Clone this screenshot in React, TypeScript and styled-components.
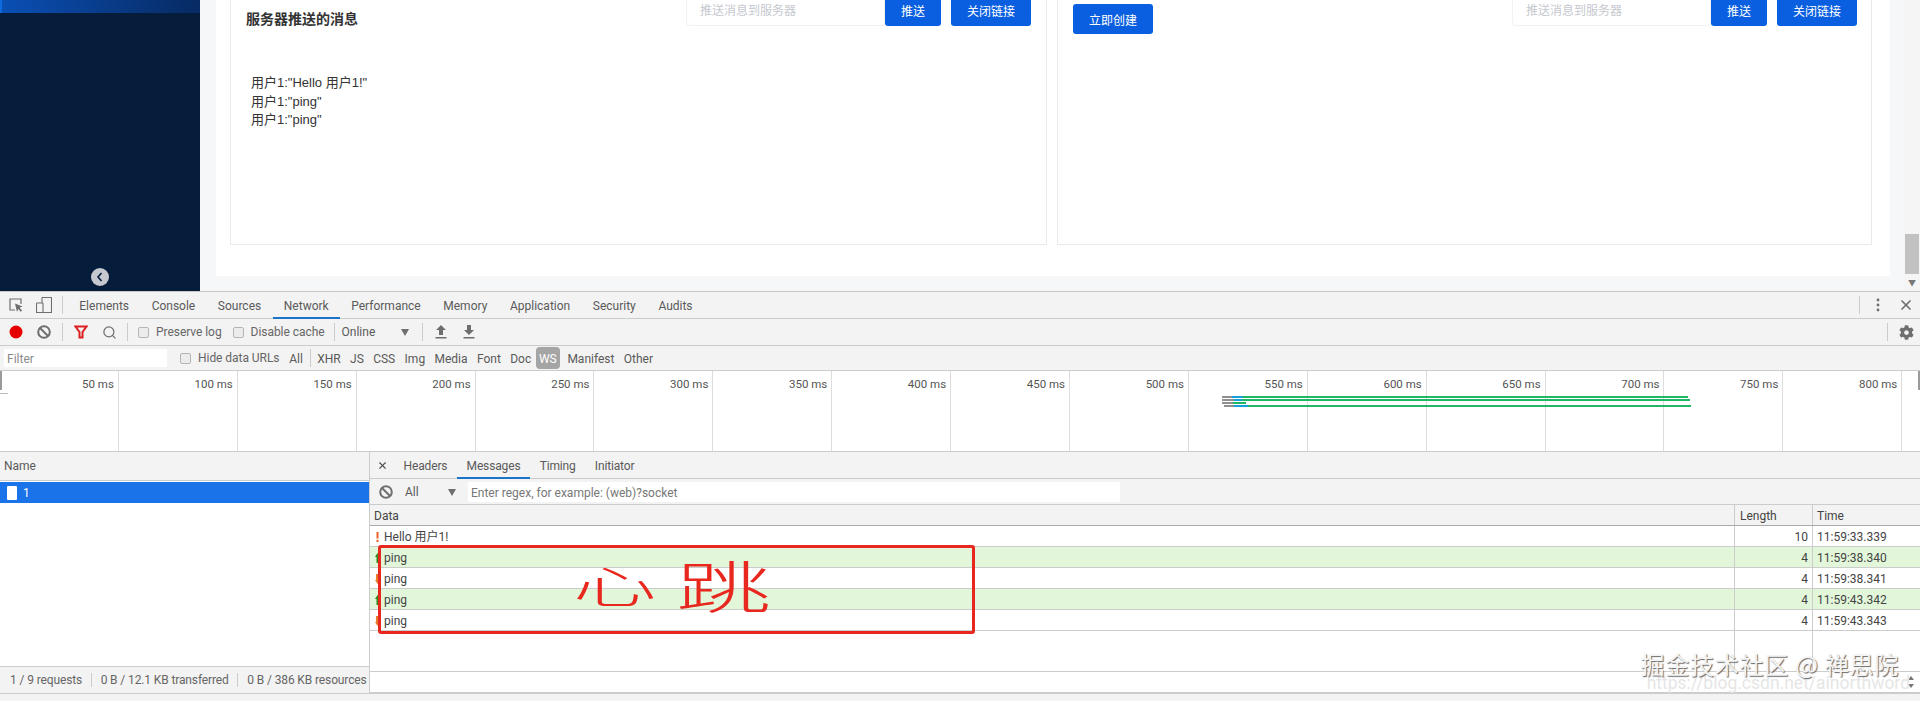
import { createGlobalStyle, styled } from "styled-components";
import { X, Search } from "lucide-react";
import { FaCog } from "react-icons/fa";

const GlobalStyle = createGlobalStyle`
  html, body {
    margin: 0;
    padding: 0;
    background: #fff;
  }
  * {
    box-sizing: border-box;
  }
`;

const Page = styled.div`
  position: relative;
  display: flex;
  flex-direction: column;
  width: 1920px;
  height: 701px;
  overflow: hidden;
  font-family: Roboto, "Noto Sans CJK SC", sans-serif;
  font-size: 12px;
  color: #5a5a5a;
`;

/* ---------- the web page above the devtools ---------- */

const Site = styled.div`
  display: flex;
  flex: 0 0 291px;
  height: 291px;
`;

const Sidebar = styled.aside`
  flex: 0 0 200px;
  display: flex;
  flex-direction: column;
  justify-content: space-between;
  align-items: center;
  padding-bottom: 5px;
  background: #061c3b;
`;

const ActiveMenu = styled.div`
  align-self: stretch;
  height: 13px;
  border-left: 2px solid #0f6ae0;
  background: linear-gradient(90deg, #0a4fb4, #072a62);
`;

const CollapseButton = styled.div`
  display: flex;
  align-items: center;
  justify-content: center;
  width: 18px;
  height: 18px;
  border-radius: 50%;
  background: #c5c8ce;
`;

const Main = styled.main`
  flex: 1;
  min-width: 0;
  padding: 0 14px 15px 16px;
  background: #f5f7f9;
`;

const Panel = styled.div`
  display: grid;
  grid-template-columns: 817px 815px;
  column-gap: 10px;
  height: 100%;
  padding: 0 0 31px 14px;
  background: #fff;
`;

const Card = styled.section<{ $right: number }>`
  height: 100%;
  padding: 0 ${({ $right }) => $right}px 0 15px;
  border: 1px solid #e8eaec;
  border-top: none;
  color: #333;
`;

const CardHead = styled.div`
  display: flex;
  justify-content: space-between;
  align-items: flex-start;
  height: 40px;
  margin-top: -6px;
`;

const CardTitle = styled.h3`
  margin: 0;
  padding-top: 16px;
  font-size: 14px;
  line-height: 18px;
  font-weight: 700;
  color: #333;
`;

const SendGroup = styled.div`
  display: flex;
  align-items: center;
`;

const SendInput = styled.div`
  width: 199px;
  height: 32px;
  padding: 1px 0 0 13px;
  border: 1px solid #f2f2f2;
  border-radius: 3px;
  font-size: 12px;
  line-height: 30px;
  color: #c5c8ce;
`;

const BlueButton = styled.button<{ $width: number }>`
  width: ${({ $width }) => $width}px;
  height: 32px;
  padding: 0;
  border: none;
  border-radius: 3px;
  background: #0a5fe0;
  color: #fff;
  font-family: inherit;
  font-size: 12px;
`;

const SpacedButton = styled(BlueButton)`
  margin-left: 10px;
`;

const CreateButton = styled(BlueButton)`
  height: 30px;
  margin: 10px 0 0;
`;

const PushedList = styled.div`
  margin-top: 40px;
  padding-left: 5px;
  font-family: "Liberation Sans", "Noto Sans CJK SC", sans-serif;
  font-size: 13px;
  line-height: 18.5px;
  color: #333;
`;

const PageScrollbar = styled.div`
  flex: 0 0 16px;
  display: flex;
  flex-direction: column;
  justify-content: flex-end;
  align-items: center;
  background: #f5f5f5;
`;

const ScrollThumb = styled.div`
  width: 14px;
  height: 40px;
  background: #c1c1c1;
`;

const ScrollArrow = styled.div`
  display: flex;
  align-items: center;
  justify-content: center;
  height: 17px;
  font-size: 8px;
  color: #777;
`;

/* ---------- devtools ---------- */

const DevTools = styled.div`
  flex: 1;
  display: flex;
  flex-direction: column;
  border-top: 1px solid #c8c8c8;
  background: #f3f3f3;
`;

const Bar = styled.div<{ $height: number }>`
  display: flex;
  align-items: center;
  flex: 0 0 ${({ $height }) => $height}px;
  height: ${({ $height }) => $height}px;
  padding-left: 2px;
  border-bottom: 1px solid #ccc;
`;

const FilterBar = styled(Bar)`
  padding-left: 4px;
`;

const IconSlot = styled.div`
  flex: 0 0 28px;
  display: flex;
  align-items: center;
  justify-content: center;
  color: #6e6e6e;
`;

const PushRight = styled.div`
  margin-left: auto;
`;

const Divider = styled.div<{ $gap?: number }>`
  flex: 0 0 1px;
  height: 18px;
  margin: 0 ${({ $gap }) => $gap ?? 4}px;
  background: #ccc;
`;

const Tabs = styled.div`
  display: flex;
  align-self: stretch;
  margin-left: 1px;
`;

const Tab = styled.div<{ $active?: boolean; $pad?: number }>`
  display: flex;
  align-items: center;
  height: 27px;
  margin-bottom: -1px;
  padding: 2px ${({ $pad }) => $pad ?? 11.3}px 0;
  border-bottom: 2px solid ${({ $active }) => ($active ? "#1a73c8" : "transparent")};
  color: #5a5a5a;
`;

const DetailTab = styled(Tab)`
  letter-spacing: -0.15px;
`;

const CheckLabel = styled.label`
  display: flex;
  align-items: center;
  gap: 7px;
  padding: 0 5px 0 6px;
  letter-spacing: -0.05px;
  color: #666;
`;

const CheckBox = styled.span`
  width: 11px;
  height: 11px;
  border: 1px solid #b5b5b5;
  border-radius: 2px;
  background: #ececec;
`;

const NetworkSelect = styled.div`
  display: flex;
  align-items: center;
  justify-content: space-between;
  width: 76px;
  margin-left: 3px;
  padding-right: 9px;
`;

const Caret = styled.span`
  width: 0;
  height: 0;
  border-left: 4px solid transparent;
  border-right: 4px solid transparent;
  border-top: 7px solid #6e6e6e;
`;

const FilterInput = styled.div`
  flex: 0 0 163px;
  height: 18px;
  margin-right: 7px;
  padding-left: 3px;
  background: #fff;
  line-height: 20px;
  color: #8a8a8a;
`;

const Chip = styled.span`
  display: flex;
  align-items: center;
  height: 22px;
  padding: 2px 4.7px 0;
  color: #5a5a5a;
`;

const ActiveChip = styled(Chip)`
  margin-right: 3px;
  padding: 2px 3px 0;
  border-radius: 4px;
  background: #a5a5a5;
  color: #fff;
`;

/* ---------- overview ---------- */

const Overview = styled.div`
  position: relative;
  display: flex;
  flex: 0 0 81px;
  border-bottom: 1px solid #ccc;
  background: #fff;
`;

const Tick = styled.div`
  flex: 0 0 118.9px;
  padding: 5px 4px 0 0;
  border-right: 1px solid #ddd;
  text-align: right;
  font-size: 11.5px;
  color: #555;
  line-height: 16px;
`;

const BarsLayer = styled.svg`
  position: absolute;
  left: 1220px;
  top: 23px;
`;

const HandleLeft = styled.div`
  position: absolute;
  left: 0;
  top: 0;
  width: 2px;
  height: 19px;
  background: #9a9a9a;
`;

const HandleDash = styled.div`
  position: absolute;
  left: 0;
  top: 22px;
  width: 8px;
  height: 1px;
  background: #bbb;
`;

const HandleRight = styled(HandleLeft)`
  left: auto;
  right: 0;
`;

/* ---------- request list + message table ---------- */

const Split = styled.div`
  display: grid;
  grid-template-columns: 370px 1fr;
  flex: 0 0 241px;
  height: 241px;
`;

const LeftPane = styled.div`
  display: flex;
  flex-direction: column;
  border-right: 1px solid #ccc;
  background: #fff;
`;

const NameHead = styled.div`
  flex: 0 0 27px;
  padding-left: 4px;
  border-bottom: 1px solid #ccc;
  background: #f3f3f3;
  line-height: 28px;
`;

const SelectedRequest = styled.div`
  display: flex;
  align-items: center;
  gap: 6px;
  height: 21px;
  margin-top: 1px;
  padding-left: 7px;
  background: #1a73e8;
  color: #fff;
`;

const FileIcon = styled.span`
  width: 10px;
  height: 14px;
  border-radius: 1px;
  background: #fff;
`;

const Spacer = styled.div`
  flex: 1;
`;

const StatusBar = styled.div`
  display: flex;
  align-items: center;
  flex: 0 0 27px;
  padding: 0 0 0 10px;
  border-top: 1px solid #ccc;
  background: #f3f3f3;
  white-space: nowrap;
  overflow: hidden;
`;

const StatusText = styled.span`
  padding-right: 8.5px;
  letter-spacing: -0.12px;
  color: #666;
`;

const StatusItem = styled(StatusText)`
  padding-left: 9px;
  border-left: 1px solid #ccc;
`;

const RightPane = styled.div`
  position: relative;
  display: flex;
  flex-direction: column;
  background: #fff;
`;

const SubTabs = styled.div`
  display: flex;
  align-items: center;
  flex: 0 0 27px;
  border-bottom: 1px solid #ccc;
  background: #f3f3f3;
`;

const CloseSlot = styled.div`
  flex: 0 0 24px;
  display: flex;
  justify-content: center;
  padding-left: 1px;
  color: #555;
`;

const MessageFilter = styled.div`
  display: flex;
  align-items: center;
  flex: 0 0 26px;
  padding-left: 2px;
  background: #f3f3f3;
  border-bottom: 1px solid #ccc;
`;

const TypeSelect = styled.div`
  display: flex;
  align-items: center;
  justify-content: space-between;
  width: 55px;
  margin-left: 5px;
  padding: 1px 4px 0 0;
`;

const RegexInput = styled.div`
  flex: 0 0 652px;
  height: 20px;
  margin-left: 8px;
  padding-left: 3px;
  background: #fff;
  line-height: 22px;
  color: #777;
`;

const Row = styled.div<{ $bg?: string; $grow?: boolean }>`
  display: flex;
  flex: ${({ $grow }) => ($grow ? "1" : "0 0 21px")};
  min-height: 0;
  border-bottom: 1px solid #ccc;
  background: ${({ $bg }) => $bg ?? "#fff"};
  line-height: 18px;
  color: #444;
`;

const HeadRow = styled(Row)`
  border-bottom-color: #aaa;
  background: #f3f3f3;
`;

const DataCell = styled.div`
  flex: 1;
  display: flex;
  align-items: center;
  gap: 4px;
  padding: 2px 0 0 5px;
`;

const HeadData = styled(DataCell)`
  padding-left: 4px;
`;

const LengthCell = styled.div<{ $head?: boolean }>`
  flex: 0 0 78px;
  padding: ${({ $head }) => ($head ? "2px 0 0 5px" : "2px 4px 0 0")};
  border-left: 1px solid #ccc;
  text-align: ${({ $head }) => ($head ? "left" : "right")};
`;

const TimeCell = styled.div`
  flex: 0 0 108px;
  padding: 2px 0 0 4px;
  border-left: 1px solid #ccc;
`;

const InputRow = styled(Row)`
  justify-content: flex-end;
  align-items: center;
  padding-right: 5px;
`;

const Footer = styled.div`
  flex: 1;
  border-top: 1px solid #ccc;
  background: #f3f3f3;
`;

/* ---------- things painted on top of the screenshot ---------- */

const RedBox = styled.div`
  position: absolute;
  left: 8px;
  top: 93px;
  width: 597px;
  height: 89px;
  border: 3px solid #e8281e;
  border-radius: 3px;
`;

const Scribble = styled.span<{ $left: number; $top: number; $size: number; $stretch: number }>`
  position: absolute;
  left: ${({ $left }) => $left}px;
  top: ${({ $top }) => $top}px;
  font-family: "Noto Sans CJK SC", sans-serif;
  font-size: ${({ $size }) => $size}px;
  font-weight: 300;
  line-height: 1;
  color: #e8281e;
  transform: scaleX(${({ $stretch }) => $stretch});
  transform-origin: left top;
`;

const Watermark = styled.div`
  position: absolute;
  right: 21px;
  top: 649px;
  font-family: "Noto Sans CJK SC", sans-serif;
  font-size: 24px;
  letter-spacing: 0.75px;
  line-height: 30px;
  white-space: nowrap;
  color: #f4f4f4;
  text-shadow: 1px 1px 1px #666;
`;

const WatermarkUrl = styled.div`
  position: absolute;
  right: 10px;
  top: 673px;
  font-size: 17.5px;
  line-height: 20px;
  white-space: nowrap;
  color: #e6e6e6;
`;

const InspectIcon = () => (
  <svg width="16" height="16" viewBox="0 0 16 16" fill="none" stroke="#6e6e6e">
    <path d="M7 13H2V2h11v5" strokeWidth="1.2" />
    <path d="M7 6.5l7.5 3-3 1.2 2.6 2.8-1.3 1.2-2.6-2.8-1.2 3z" fill="#6e6e6e" stroke="none" />
  </svg>
);

const DeviceIcon = () => (
  <svg width="16" height="16" viewBox="0 0 16 16" fill="none" stroke="#6e6e6e" strokeWidth="1.1">
    <rect x="6" y="0.5" width="9.5" height="15" rx="0.5" />
    <rect x="0.5" y="6" width="6.5" height="9.5" rx="0.5" fill="#f3f3f3" />
  </svg>
);

const RecordDot = () => (
  <svg width="14" height="14" viewBox="0 0 14 14">
    <circle cx="7" cy="7" r="6.5" fill="#e60000" />
  </svg>
);

const ClearIcon = () => (
  <svg width="14" height="14" viewBox="0 0 14 14" fill="none" stroke="#6e6e6e" strokeWidth="2">
    <circle cx="7" cy="7" r="5.8" />
    <path d="M3 3l8 8" />
  </svg>
);

const FunnelIcon = () => (
  <svg width="14" height="14" viewBox="0 0 14 14" fill="none" stroke="#dd1f1f" strokeWidth="2">
    <path d="M1.5 1.5h11L8.5 7v5.5h-3V7z" />
  </svg>
);

const ArrowBarIcon = ({ down }: { down?: boolean }) => (
  <svg width="12" height="14" viewBox="0 0 12 14" fill="#6e6e6e">
    <path d={down ? "M4 0h4v5h3L6 10 1 5h3z" : "M6 0l5 5H8v5H4V5H1z"} />
    <rect x="0.5" y="12" width="11" height="1.5" />
  </svg>
);

const DotsIcon = () => (
  <svg width="4" height="14" viewBox="0 0 4 14" fill="#6e6e6e">
    <circle cx="2" cy="2" r="1.4" />
    <circle cx="2" cy="7" r="1.4" />
    <circle cx="2" cy="12" r="1.4" />
  </svg>
);

const ChevronLeft = () => (
  <svg width="8" height="10" viewBox="0 0 8 10" fill="none" stroke="#061c3b" strokeWidth="1.6">
    <path d="M5.5 1L2 5l3.5 4" />
  </svg>
);

const SpinnerIcon = () => (
  <svg width="8" height="14" viewBox="0 0 8 14" fill="#777">
    <path d="M4 1l3 4H1zM4 13L1 9h6z" />
  </svg>
);

// little arrow in front of each message, sent is green and received is orange
const MessageMark = ({ sent, thin }: { sent?: boolean; thin?: boolean }) => (
  <svg width="5" height="10" viewBox="0 0 5 10">
    {thin ? (
      <path d="M1.5 0h2v6.5h-2zM1.5 7.8h2V10h-2z" fill="#e8622a" />
    ) : (
      <path
        d={sent ? "M2.5 0L5 4H3.5v6h-2V4H0z" : "M1 0h3v6h1L2.5 10 0 6h1z"}
        fill={sent ? "#2d8a18" : "#ea7a2c"}
      />
    )}
  </svg>
);

const tools = ["Elements", "Console", "Sources", "Network", "Performance", "Memory", "Application", "Security", "Audits"];
const typeFilters = ["XHR", "JS", "CSS", "Img", "Media", "Font", "Doc", "WS", "Manifest", "Other"];
const ticks = [50, 100, 150, 200, 250, 300, 350, 400, 450, 500, 550, 600, 650, 700, 750, 800];

const waterfall = [
  { y: 2, grey: 2, wait: 12, blue: 23, end: 468 },
  { y: 5, grey: 2, wait: 14, blue: 22, end: 470 },
  { y: 8, grey: 2, wait: 13, blue: 13, end: 26 },
  { y: 11, grey: 4, wait: 14, blue: 28, end: 471 },
];

const messages = [
  { text: "Hello 用户1!", length: 10, time: "11:59:33.339", thin: true },
  { text: "ping", length: 4, time: "11:59:38.340", sent: true },
  { text: "ping", length: 4, time: "11:59:38.341" },
  { text: "ping", length: 4, time: "11:59:43.342", sent: true },
  { text: "ping", length: 4, time: "11:59:43.343" },
];

const SendControls = () => (
  <SendGroup>
    <SendInput>推送消息到服务器</SendInput>
    <BlueButton $width={56}>推送</BlueButton>
    <SpacedButton $width={80}>关闭链接</SpacedButton>
  </SendGroup>
);

const App = () => {
  return (
    <Page>
      <GlobalStyle />
      <Site>
        <Sidebar>
          <ActiveMenu />
          <CollapseButton>
            <ChevronLeft />
          </CollapseButton>
        </Sidebar>
        <Main>
          <Panel>
            <Card $right={15}>
              <CardHead>
                <CardTitle>服务器推送的消息</CardTitle>
                <SendControls />
              </CardHead>
              <PushedList>
                <div>用户1:"Hello 用户1!"</div>
                <div>用户1:"ping"</div>
                <div>用户1:"ping"</div>
              </PushedList>
            </Card>
            <Card $right={14}>
              <CardHead>
                <CreateButton $width={80}>立即创建</CreateButton>
                <SendControls />
              </CardHead>
            </Card>
          </Panel>
        </Main>
        <PageScrollbar>
          <ScrollThumb />
          <ScrollArrow>▼</ScrollArrow>
        </PageScrollbar>
      </Site>

      <DevTools>
        <Bar $height={27}>
          <IconSlot>
            <InspectIcon />
          </IconSlot>
          <IconSlot>
            <DeviceIcon />
          </IconSlot>
          <Divider />
          <Tabs>
            {tools.map((name) => (
              <Tab key={name} $active={name === "Network"}>
                {name}
              </Tab>
            ))}
          </Tabs>
          <PushRight />
          <Divider />
          <IconSlot>
            <DotsIcon />
          </IconSlot>
          <IconSlot>
            <X size={16} strokeWidth={2.5} />
          </IconSlot>
        </Bar>

        <Bar $height={27}>
          <IconSlot>
            <RecordDot />
          </IconSlot>
          <IconSlot>
            <ClearIcon />
          </IconSlot>
          <Divider />
          <IconSlot>
            <FunnelIcon />
          </IconSlot>
          <IconSlot>
            <Search size={15} strokeWidth={2} />
          </IconSlot>
          <Divider />
          <CheckLabel>
            <CheckBox />
            Preserve log
          </CheckLabel>
          <CheckLabel>
            <CheckBox />
            Disable cache
          </CheckLabel>
          <Divider />
          <NetworkSelect>
            Online
            <Caret />
          </NetworkSelect>
          <Divider />
          <IconSlot>
            <ArrowBarIcon />
          </IconSlot>
          <IconSlot>
            <ArrowBarIcon down />
          </IconSlot>
          <PushRight />
          <Divider />
          <IconSlot>
            <FaCog size={15} />
          </IconSlot>
        </Bar>

        <FilterBar $height={25}>
          <FilterInput>Filter</FilterInput>
          <CheckLabel>
            <CheckBox />
            Hide data URLs
          </CheckLabel>
          <Chip>All</Chip>
          <Divider $gap={2} />
          {typeFilters.map((name) =>
            name === "WS" ? <ActiveChip key={name}>{name}</ActiveChip> : <Chip key={name}>{name}</Chip>
          )}
        </FilterBar>

        <Overview>
          {ticks.map((ms) => (
            <Tick key={ms}>{ms} ms</Tick>
          ))}
          <HandleLeft />
          <HandleDash />
          <HandleRight />
          <BarsLayer width="480" height="16" viewBox="0 0 480 16">
            {waterfall.map((bar) => (
              <g key={bar.y}>
                <rect x={bar.grey} y={bar.y} width={bar.wait - bar.grey} height="2" fill="#8f8f8f" />
                <rect x={bar.wait} y={bar.y} width={bar.end - bar.wait} height="2" fill="#1fb866" />
                <rect x={bar.wait} y={bar.y} width={bar.blue - bar.wait} height="2" fill="#18a0d8" />
              </g>
            ))}
          </BarsLayer>
        </Overview>

        <Split>
          <LeftPane>
            <NameHead>Name</NameHead>
            <SelectedRequest>
              <FileIcon />1
            </SelectedRequest>
            <Spacer />
            <StatusBar>
              <StatusText>1 / 9 requests</StatusText>
              <StatusItem>0 B / 12.1 KB transferred</StatusItem>
              <StatusItem>0 B / 386 KB resources</StatusItem>
            </StatusBar>
          </LeftPane>

          <RightPane>
            <SubTabs>
              <CloseSlot>
                <X size={11} strokeWidth={2.5} />
              </CloseSlot>
              <DetailTab $pad={9.6}>Headers</DetailTab>
              <DetailTab $pad={9.6} $active>
                Messages
              </DetailTab>
              <DetailTab $pad={9.6}>Timing</DetailTab>
              <DetailTab $pad={9.6}>Initiator</DetailTab>
            </SubTabs>
            <MessageFilter>
              <IconSlot>
                <ClearIcon />
              </IconSlot>
              <TypeSelect>
                All
                <Caret />
              </TypeSelect>
              <RegexInput>Enter regex, for example: (web)?socket</RegexInput>
            </MessageFilter>
            <HeadRow>
              <HeadData>Data</HeadData>
              <LengthCell $head>Length</LengthCell>
              <TimeCell>Time</TimeCell>
            </HeadRow>
            {messages.map((msg) => (
              <Row key={msg.time} $bg={msg.sent ? "#e2f6d9" : undefined}>
                <DataCell>
                  <MessageMark sent={msg.sent} thin={msg.thin} />
                  {msg.text}
                </DataCell>
                <LengthCell>{msg.length}</LengthCell>
                <TimeCell>{msg.time}</TimeCell>
              </Row>
            ))}
            <Row $grow>
              <DataCell />
              <LengthCell />
              <TimeCell />
            </Row>
            <InputRow>
              <SpinnerIcon />
            </InputRow>
            <RedBox />
          </RightPane>
        </Split>
        <Footer />
      </DevTools>

      <Scribble $left={573} $top={562} $size={44} $stretch={1.9}>
        心
      </Scribble>
      <Scribble $left={676} $top={556} $size={56} $stretch={1.7}>
        跳
      </Scribble>
      <WatermarkUrl>https://blog.csdn.net/ainorthword</WatermarkUrl>
      <Watermark>掘金技术社区 @ 禅思院</Watermark>
    </Page>
  );
};

export default App;
